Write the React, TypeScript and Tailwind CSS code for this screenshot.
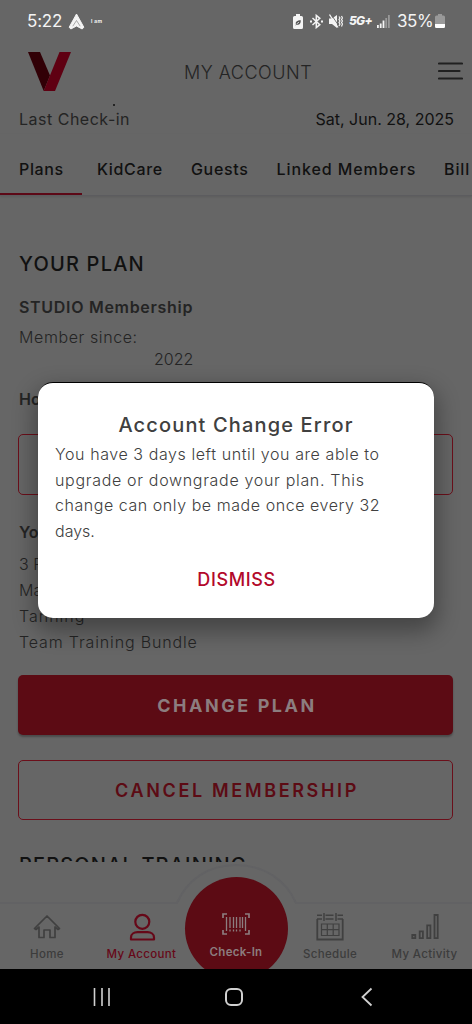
import React from "react";
import clsx from "clsx";

interface TabItem {
  label: string;
  className: string;
  active?: boolean;
}

const tabs: TabItem[] = [
  { label: "Plans", className: "w-[78px] tracking-[0.65px]", active: true },
  { label: "KidCare", className: "w-[94px] tracking-[0.65px]" },
  { label: "Guests", className: "w-[85.5px] tracking-[0.65px]" },
  { label: "Linked Members", className: "w-[167.5px] tracking-[0.9px]" },
  { label: "Bill", className: "w-[28px] tracking-[0.9px]" },
];

function StatusBar() {
  return (
    <div className="flex h-10 shrink-0 items-center pt-[2px] text-[17px] leading-5 text-[#f4f4f4]">
      <span className="ml-[27px] w-[41px] whitespace-nowrap tracking-[-0.2px]">5:22</span>
      <svg width="17" height="17" viewBox="0 0 17 17" fill="none">
        <path d="M8.5 1 15.8 14.2 14.2 16 8.5 13 2.8 16 1.2 14.2Z" fill="#f4f4f4" stroke="#f4f4f4" strokeLinejoin="round" />
        <path d="M4.8 13.2 8.5 7.5 12.2 13.2" stroke="#888" strokeWidth="0.7" />
      </svg>
      <span className="ml-[6px] text-[5px] font-bold leading-5 tracking-[0.3px]">I am</span>
      <div className="flex-1" />
      <svg className="mr-[7px]" width="10" height="15" viewBox="0 0 10 15">
        <path d="M3 0h4v2h1.5A1.5 1.5 0 0 1 10 3.5v10A1.5 1.5 0 0 1 8.5 15h-7A1.5 1.5 0 0 1 0 13.5v-10A1.5 1.5 0 0 1 1.500 2H3Z" fill="#f4f4f4" />
        <path d="M2 11.5 3 10.5C2 8 4 6.3 7.8 6.3 7.8 9.5 6.5 11.3 3.9 10.7Z" fill="#555" />
        <path d="M3.5 10 6 8.2" fill="none" stroke="#f4f4f4" strokeWidth="0.8" />
      </svg>
      <svg className="mr-[6px]" width="13" height="15" viewBox="0 0 13 15" fill="none" stroke="#f4f4f4" strokeWidth="1.5">
        <path d="M2.500 4 9.800 10.700 6.300 13.600V1.400L9.800 4.300 2.500 11" />
        <path d="M0 7.500h2M11 7.500h2" strokeWidth="1.800" />
      </svg>
      <svg className="mr-[6px]" width="14" height="15" viewBox="0 0 14 15" fill="none" stroke="#f4f4f4">
        <path d="M0 4.500h3L8 1v13L3 10H0Z" fill="#f4f4f4" stroke="none" />
        <path d="M1.800 0 9.600 11.500" stroke="#666" strokeWidth="0.9" />
        <path d="M.5 .5 9 13.500" strokeWidth="1.300" />
        <path d="M10 2.500 11 4 10 5.500 11 7 10 8.500 11 10 10 12M12.500 2 13.500 4 12.500 5.500 13.500 7 12.500 8.500 13.500 10 12.500 12.500" strokeWidth="1.200" />
      </svg>
      <span className="w-[28px] whitespace-nowrap text-[12px] font-extrabold italic tracking-[-0.7px]">5G+</span>
      <svg className="mr-[7px]" width="13" height="13" viewBox="0 0 13 13" fill="#f4f4f4">
        <path d="M0 10h1.800v3H0ZM2.800 8.500h1.800V13H2.800ZM5.600 5.500h1.800V13H5.600Z" />
        <path d="M8.300 3h1.800v10H8.300ZM11 0h1.800v13H11Z" fill="#999" />
      </svg>
      <span className="w-[38px] whitespace-nowrap tracking-[-0.4px]">35%</span>
      <svg className="mr-[27px]" width="10" height="14" viewBox="0 0 10 14">
        <path d="M3 0h4v1.500h1.500A1.500 1.500 0 0 1 10 3v9.500A1.500 1.500 0 0 1 8.500 14h-7A1.500 1.500 0 0 1 0 12.500V3A1.500 1.500 0 0 1 1.500 1.500H3Z" fill="#999" />
        <path d="M0 10h10v2.500A1.500 1.500 0 0 1 8.500 14h-7A1.500 1.500 0 0 1 0 12.500Z" fill="#fff" />
      </svg>
    </div>
  );
}

function Header() {
  return (
    <header className="flex h-[60px] shrink-0 items-center pt-[2px]">
      <svg className="ml-7" width="43" height="39" viewBox="0 0 43 39">
        <path d="M0 0h12l10 23.500-6.300 15.500Z" fill="#310006" />
        <path d="M31.500 0H43L27 39H15.700Z" fill="#5f0012" />
      </svg>
      <h1 className="ml-[113px] w-[254px] whitespace-nowrap pt-[3px] text-[18px] font-light leading-6 tracking-[0.5px] text-[#242424]">MY ACCOUNT</h1>
      <svg width="25" height="18" viewBox="0 0 25 18" stroke="#202020" strokeWidth="2.200" strokeLinecap="round">
        <path d="M1 1.500h23M1 9h20.500M1 16.500h23" />
      </svg>
    </header>
  );
}

function Tabs() {
  return (
    <nav className="flex h-[62px] shrink-0 overflow-hidden border-b border-[#5c5c5f] pl-[19px] shadow-[0_1px_2px_rgba(0,0,0,0.1)]">
      {tabs.map((tab) => (
        <div key={tab.label} className={clsx("relative h-full shrink-0 whitespace-nowrap pt-[23px] text-[16px] font-medium leading-6 text-[#111]", tab.className)}>
          {tab.label}
          {tab.active && <div className="absolute -left-[19px] bottom-0 h-[2px] w-[82px] bg-[#5c0816]" />}
        </div>
      ))}
    </nav>
  );
}

function Plan() {
  return (
    <main className="flex h-[666px] shrink-0 flex-col overflow-hidden px-[19px] pt-[56px] text-[16px] font-light leading-[26px] text-[#242424]">
      <h2 className="text-[20px] font-medium leading-6 tracking-[1.2px] text-[#111]">YOUR PLAN</h2>
      <p className="mt-[18px] font-semibold tracking-[0.7px] text-[#242424]">STUDIO Membership</p>
      <p className="mt-[5px] leading-6 tracking-[0.6px]">Member since:</p>
      <p className="pl-[135px] leading-5">2022</p>
      <p className="mt-[17px] font-semibold">Ho</p>
      <div className="-ml-px mt-[22px] h-[61px] shrink-0 rounded-[5px] border border-[#6b0f1a]" />
      <p className="mt-[24px] font-semibold">Yo</p>
      <p className="mt-[6px]">3 F</p>
      <p>Ma</p>
      <p className="tracking-[1px]">Tanning</p>
      <p className="tracking-[0.85px]">Team Training Bundle</p>
      <button className="-ml-px mt-[20px] h-[60px] shrink-0 rounded-[5px] bg-[#5c0b14] pl-[3px] pt-[2px] text-[18px] font-bold tracking-[2.55px] text-[#8c7d7f] shadow-[0_2px_2px_rgba(0,0,0,0.28)]">CHANGE PLAN</button>
      <button className="-ml-px mt-[25px] h-[60px] shrink-0 rounded-[5px] border border-[#6b0f1a] pl-[3px] pt-[2px] text-[18px] font-semibold tracking-[2.65px] text-[#5c0b14]">CANCEL MEMBERSHIP</button>
      <h2 className="mt-[33px] shrink-0 whitespace-nowrap text-[20px] font-medium leading-6 tracking-[1.15px] text-[#111]">PERSONAL TRAINING</h2>
    </main>
  );
}

function HomeIcon() {
  return (
    <svg width="28" height="28" viewBox="0 0 28 28" fill="none" stroke="#404040" strokeWidth="1.700" strokeLinejoin="round" strokeLinecap="round">
      <path d="M1.500 15.500 14 3l12.500 12.500-1.500 1-3-2.500V24.500h-5V17h-6v7.500H6V14l-3 2.500Z" />
    </svg>
  );
}

function AccountIcon() {
  return (
    <svg width="28" height="28" viewBox="0 0 28 28" fill="none" stroke="#660818" strokeWidth="2.200" strokeLinejoin="round">
      <circle cx="14.300" cy="8.800" r="7" />
      <path d="M3 26.500v-2c0-3.500 3-5.300 6.500-5.300h10c3.500 0 6.500 1.800 6.500 5.300v2Z" />
    </svg>
  );
}

function ScheduleIcon() {
  return (
    <svg width="28" height="28" viewBox="0 0 28 28" fill="none" stroke="#404040" strokeWidth="1.500">
      <path d="M1 2.200h5M9.500 2.200h8M21.500 2.200H27M1 6h5M9.500 6h8M21.500 6H27M8 0v8M20 0v8" />
      <path d="M1.300 6v20.500h25.400V6" strokeWidth="1.800" />
      <path d="M5.500 11h17.500v11.500H5.500ZM5.500 16.700H23M11.300 11v11.500M17.200 11v11.500" strokeWidth="1.200" />
    </svg>
  );
}

function ActivityIcon() {
  return (
    <svg width="28" height="28" viewBox="0 0 28 28" fill="none" stroke="#404040" strokeWidth="1.800">
      <path d="M1.300 22h3v3.200h-3ZM8.700 18.300h3.200v6.900H8.700ZM16.200 12.300h3.200v12.900h-3.200ZM23.500 2H26.700v23.200h-3.200Z" />
    </svg>
  );
}

interface NavItemProps {
  label: string;
  className: string;
  children: React.ReactNode;
}

function NavItem({ label, className, children }: NavItemProps) {
  return (
    <div className={clsx("flex flex-col items-center pt-[10px]", className)}>
      {children}
      <span className="mt-[3px] whitespace-nowrap text-[11.5px] font-medium leading-5 tracking-[0.35px]">{label}</span>
    </div>
  );
}

function BottomNav() {
  return (
    <div className="relative h-[107px] shrink-0 overflow-hidden">
      <svg className="absolute left-0 top-0" width="472" height="107" viewBox="0 0 472 107" fill="none">
        <path d="M0 41H177C187 18 208 3 236 3S286 18 296 41H472" stroke="#626264" strokeWidth="2" />
      </svg>
      <div className="relative mt-[41px] flex text-[#3c3c3c]">
        <NavItem label="Home" className="w-[94px]"><HomeIcon /></NavItem>
        <NavItem label="My Account" className="w-[95px] text-[#660818]"><AccountIcon /></NavItem>
        <div className="w-[94px]" />
        <NavItem label="Schedule" className="w-[94px]"><ScheduleIcon /></NavItem>
        <NavItem label="My Activity" className="w-[95px]"><ActivityIcon /></NavItem>
      </div>
      <div className="absolute left-[184.5px] top-[15px] flex size-[103px] flex-col items-center rounded-full bg-[#5c0b14] pt-[36px]">
        <svg width="28" height="22" viewBox="0 0 28 22" fill="none" stroke="#8c7d7f" strokeWidth="1.700">
          <path d="M5 1H1v4M23 1h4v4M5 21H1v-4M23 21h4v-4" />
          <path d="M4.500 4v14M8 4v11M8 16.500v2M11.500 4v11M11.500 16.500v2M14.500 4v11M14.500 16.500v2M18 4v11M18 16.500v2M20.500 4v11M23.500 4v14" strokeWidth="1.300" />
        </svg>
        <span className="mt-[7px] text-[11.5px] font-semibold leading-5 tracking-[0.3px] text-[#8c7d7f]">Check-In</span>
      </div>
    </div>
  );
}

function SystemNav() {
  return (
    <div className="flex h-[55px] shrink-0 items-center bg-black">
      <svg className="ml-[93px]" width="18" height="18" viewBox="0 0 18 18" stroke="#d0d0d0" strokeWidth="1.600">
        <path d="M1.500 0v18M9 0v18M16 0v18" />
      </svg>
      <div className="ml-[114px] h-[18px] w-[18px] rounded-[6px] border-2 border-[#d0d0d0]" />
      <svg className="ml-[118px]" width="12" height="20" viewBox="0 0 12 20" fill="none" stroke="#d0d0d0" strokeWidth="1.800">
        <path d="M10.500 1.500 1.500 10 10.500 18.500" />
      </svg>
    </div>
  );
}

function ErrorDialog() {
  return (
    <div className="absolute left-[38px] top-[382px] flex h-[236px] w-[396px] flex-col rounded-[15px] border-t border-black bg-white px-[17px] pt-[28px] shadow-[0_10px_22px_4px_rgba(0,0,0,0.32)]">
      <h3 className="text-center text-[20px] font-medium leading-7 tracking-[1.15px] text-[#404040]">Account Change Error</h3>
      <p className="mt-[3px] whitespace-nowrap text-[16px] font-light leading-[25.5px] text-[#404040]">
        <span className="tracking-[0.58px]">You have 3 days left until you are able to</span>
        <br />
        <span className="tracking-[0.68px]">upgrade or downgrade your plan. This</span>
        <br />
        <span className="tracking-[0.55px]">change can only be made once every 32</span>
        <br />
        days.
      </p>
      <button className="mt-[22px] pl-[1px] text-[18px] font-medium leading-7 tracking-[0.6px] text-[#b3092a]">DISMISS</button>
    </div>
  );
}

export default function App(): React.JSX.Element {
  return (
    <div className="relative flex h-[1024px] w-[472px] flex-col overflow-hidden bg-[#666] font-[Inter,sans-serif]">
      <StatusBar />
      <Header />
      <div className="relative flex h-[34px] shrink-0 items-center justify-between pl-[19px] pr-[18px] pt-[3px] text-[16px] leading-6">
        <span className="absolute left-[113px] top-[4px] h-[2px] w-[2px] bg-[#242424]" />
        <span className="tracking-[0.5px] text-[#242424]">Last Check-in</span>
        <span className="text-[#111]">Sat, Jun. 28, 2025</span>
      </div>
      <Tabs />
      <Plan />
      <BottomNav />
      <SystemNav />
      <ErrorDialog />
    </div>
  );
}
